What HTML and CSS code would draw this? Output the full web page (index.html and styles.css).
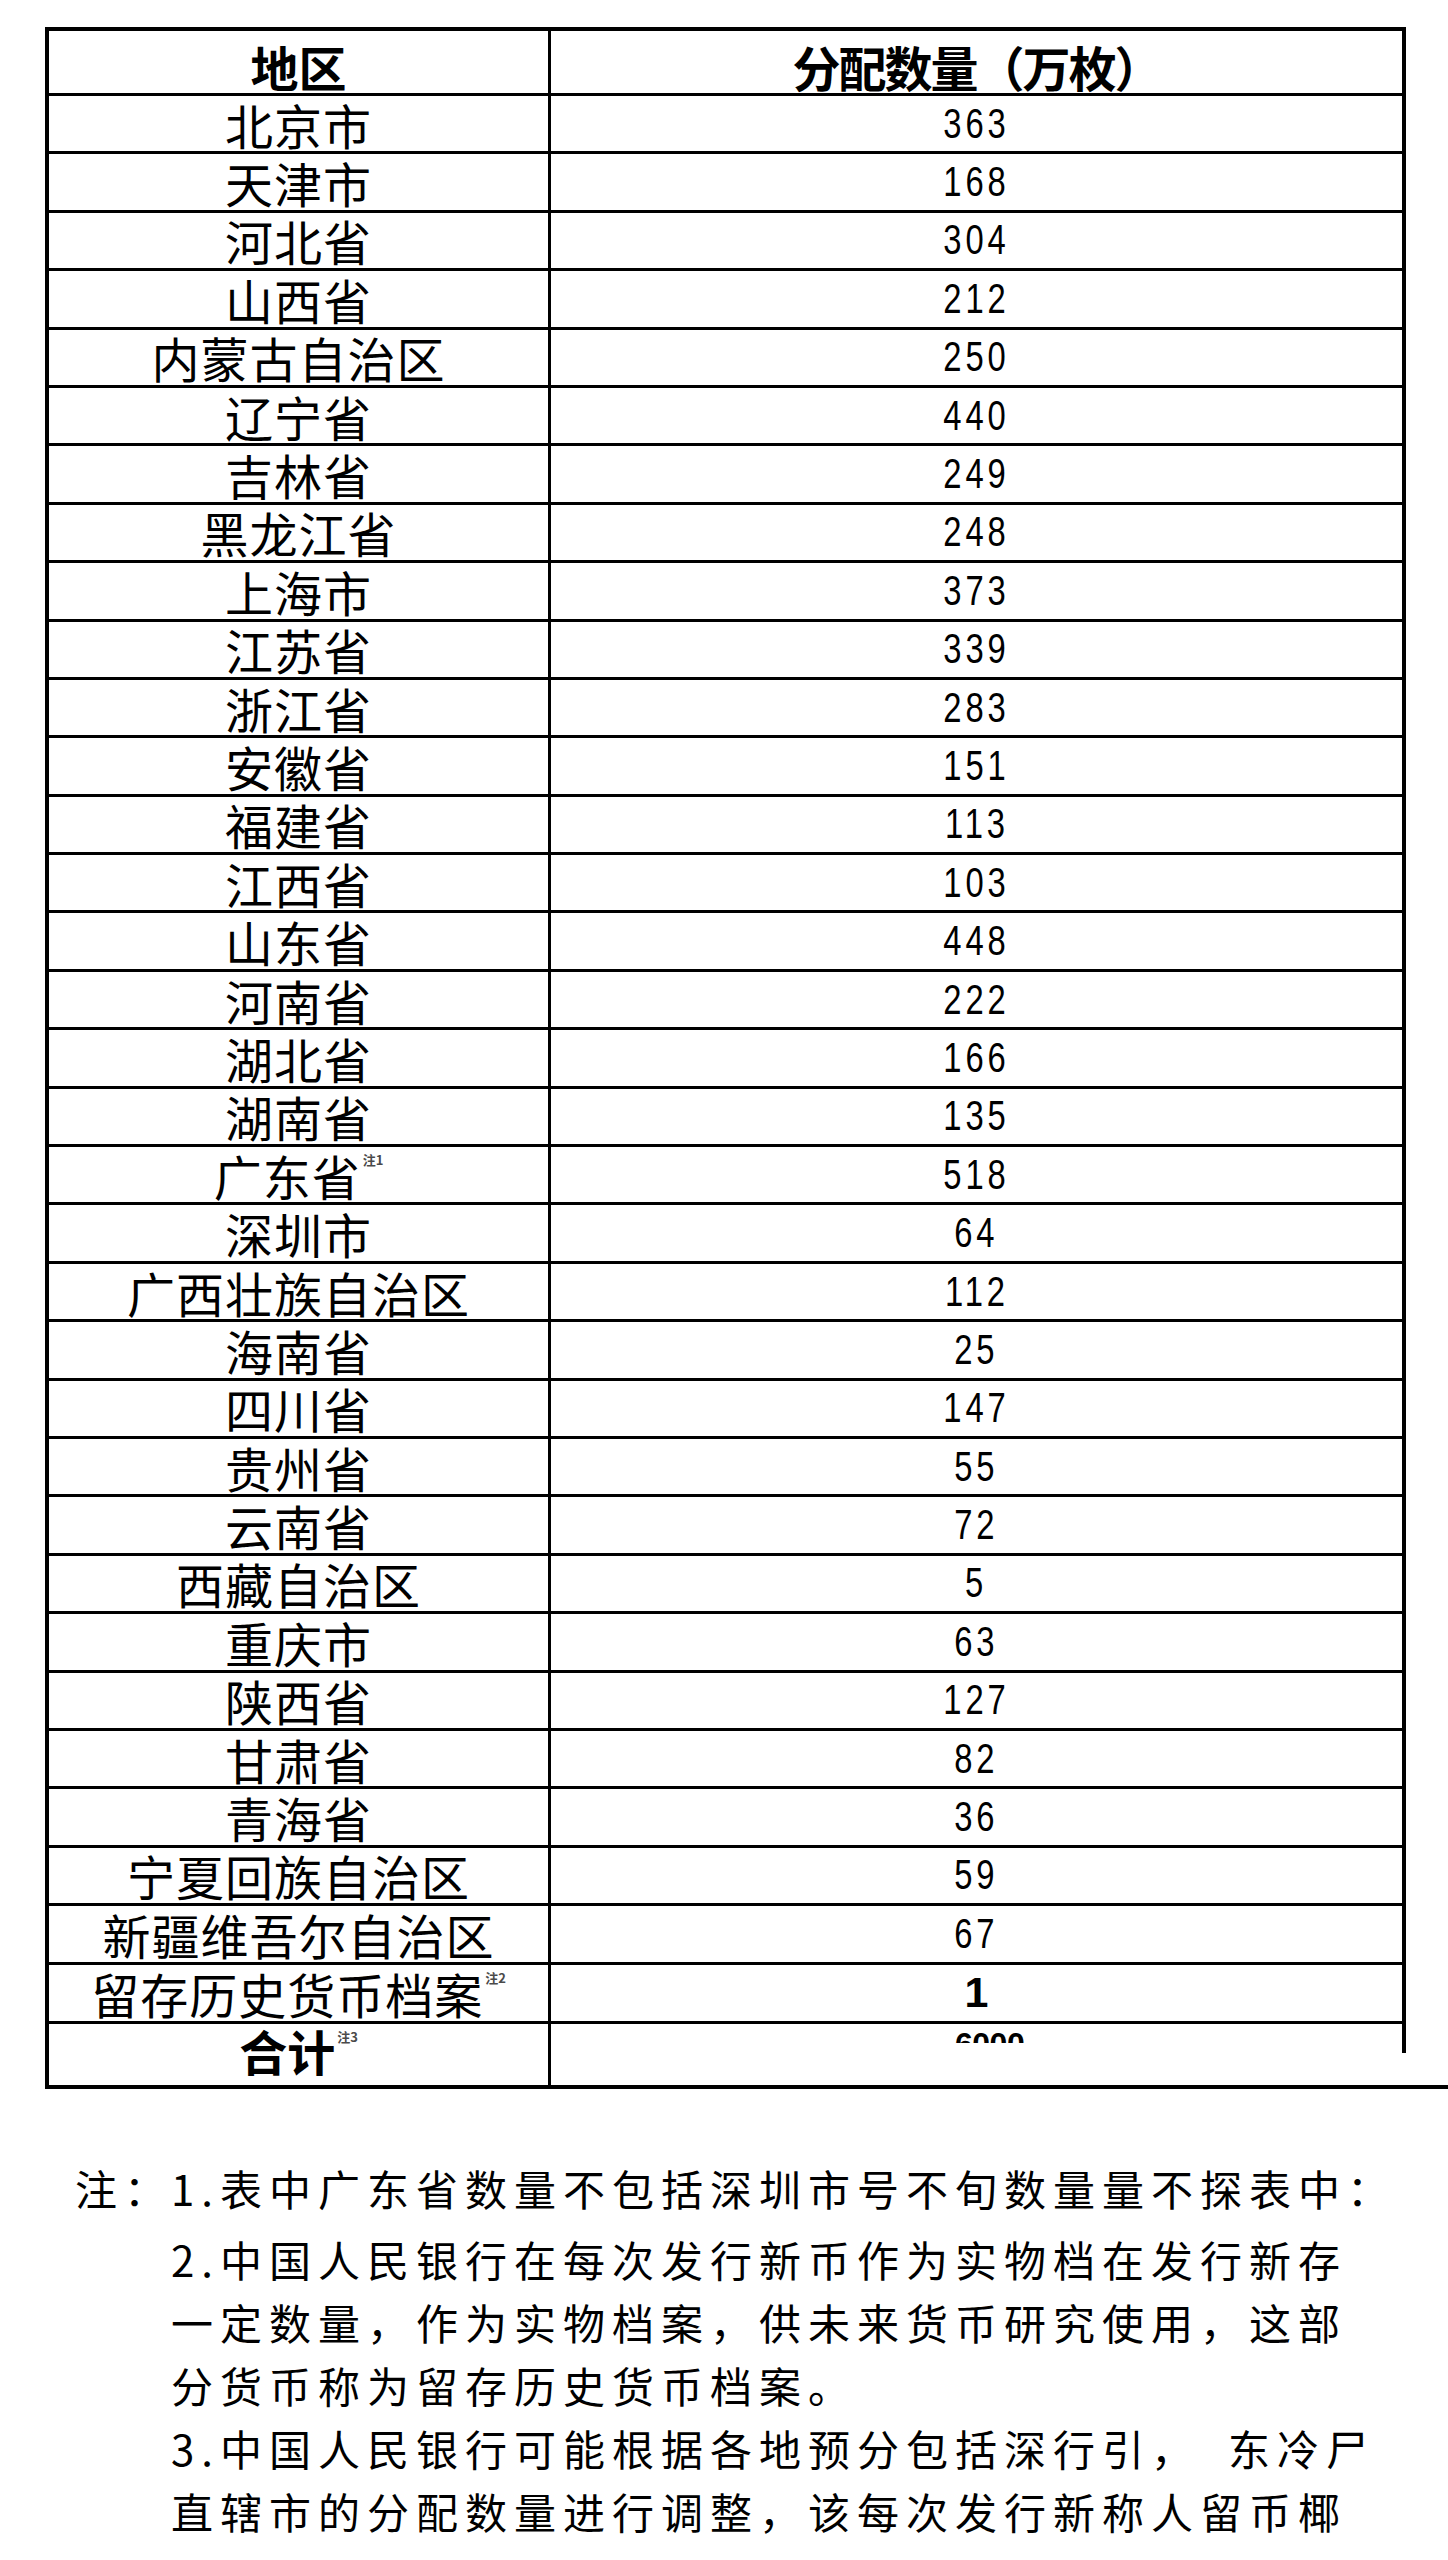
FILE: index.html
```html
<!DOCTYPE html>
<html lang="zh-CN">
<head>
<meta charset="utf-8">
<title>分配数量</title>
<link rel="stylesheet" href="styles.css">
</head>
<body>
<div class="sheet">
  <div class="grid">
    <div class="row head">
      <div class="cell name"><span class="hd">地区</span></div>
      <div class="cell val"><span class="hd hd2">分配数量（万枚）</span></div>
    </div>
    <div class="row"><div class="cell name">北京市</div><div class="cell val"><span class="num">363</span></div></div>
    <div class="row"><div class="cell name">天津市</div><div class="cell val"><span class="num">168</span></div></div>
    <div class="row"><div class="cell name">河北省</div><div class="cell val"><span class="num">304</span></div></div>
    <div class="row"><div class="cell name">山西省</div><div class="cell val"><span class="num">212</span></div></div>
    <div class="row"><div class="cell name">内蒙古自治区</div><div class="cell val"><span class="num">250</span></div></div>
    <div class="row"><div class="cell name">辽宁省</div><div class="cell val"><span class="num">440</span></div></div>
    <div class="row"><div class="cell name">吉林省</div><div class="cell val"><span class="num">249</span></div></div>
    <div class="row"><div class="cell name">黑龙江省</div><div class="cell val"><span class="num">248</span></div></div>
    <div class="row"><div class="cell name">上海市</div><div class="cell val"><span class="num">373</span></div></div>
    <div class="row"><div class="cell name">江苏省</div><div class="cell val"><span class="num">339</span></div></div>
    <div class="row"><div class="cell name">浙江省</div><div class="cell val"><span class="num">283</span></div></div>
    <div class="row"><div class="cell name">安徽省</div><div class="cell val"><span class="num">151</span></div></div>
    <div class="row"><div class="cell name">福建省</div><div class="cell val"><span class="num">113</span></div></div>
    <div class="row"><div class="cell name">江西省</div><div class="cell val"><span class="num">103</span></div></div>
    <div class="row"><div class="cell name">山东省</div><div class="cell val"><span class="num">448</span></div></div>
    <div class="row"><div class="cell name">河南省</div><div class="cell val"><span class="num">222</span></div></div>
    <div class="row"><div class="cell name">湖北省</div><div class="cell val"><span class="num">166</span></div></div>
    <div class="row"><div class="cell name">湖南省</div><div class="cell val"><span class="num">135</span></div></div>
    <div class="row"><div class="cell name">广东省<sup class="note">注1</sup></div><div class="cell val"><span class="num">518</span></div></div>
    <div class="row"><div class="cell name">深圳市</div><div class="cell val"><span class="num">64</span></div></div>
    <div class="row"><div class="cell name">广西壮族自治区</div><div class="cell val"><span class="num">112</span></div></div>
    <div class="row"><div class="cell name">海南省</div><div class="cell val"><span class="num">25</span></div></div>
    <div class="row"><div class="cell name">四川省</div><div class="cell val"><span class="num">147</span></div></div>
    <div class="row"><div class="cell name">贵州省</div><div class="cell val"><span class="num">55</span></div></div>
    <div class="row"><div class="cell name">云南省</div><div class="cell val"><span class="num">72</span></div></div>
    <div class="row"><div class="cell name">西藏自治区</div><div class="cell val"><span class="num">5</span></div></div>
    <div class="row"><div class="cell name">重庆市</div><div class="cell val"><span class="num">63</span></div></div>
    <div class="row"><div class="cell name">陕西省</div><div class="cell val"><span class="num">127</span></div></div>
    <div class="row"><div class="cell name">甘肃省</div><div class="cell val"><span class="num">82</span></div></div>
    <div class="row"><div class="cell name">青海省</div><div class="cell val"><span class="num">36</span></div></div>
    <div class="row"><div class="cell name">宁夏回族自治区</div><div class="cell val"><span class="num">59</span></div></div>
    <div class="row"><div class="cell name">新疆维吾尔自治区</div><div class="cell val"><span class="num">67</span></div></div>
    <div class="row keep"><div class="cell name">留存历史货币档案<sup class="note">注2</sup></div><div class="cell val"><span class="one">1</span></div></div>
  </div>
  <div class="total">
    <div class="cell name total-name"><span class="hd">合计</span><sup class="note">注3</sup></div>
    <div class="total-val">
      <div class="total-box"><span class="clip">6000</span></div>
    </div>
  </div>
</div>

<div class="notes">
  <div class="label">注：</div>
  <div class="items">
    <div class="item first">
      <div class="line">1.表中广东省数量不包括深圳市号不旬数量量不探表中：</div>
    </div>
    <div class="item">
      <div class="line">2.中国人民银行在每次发行新币作为实物档在发行新存</div>
      <div class="line">一定数量，作为实物档案，供未来货币研究使用，这部</div>
      <div class="line">分货币称为留存历史货币档案。</div>
    </div>
    <div class="item">
      <div class="line">3.中国人民银行可能根据各地预分包括深行引，　东冷尸</div>
      <div class="line">直辖市的分配数量进行调整，该每次发行新称人留币椰</div>
    </div>
  </div>
</div>
</body>
</html>
```

FILE: styles.css
```css
html, body {
  margin: 0;
  padding: 0;
  background: #ffffff;
  color: #000000;
}

body {
  width: 1448px;
  font-family: "Noto Sans CJK SC", "Noto Sans CJK TC", sans-serif;
}

.sheet {
  padding-top: 27px;
  margin-left: 45px;
  width: 1403px;
}

.grid {
  box-sizing: border-box;
  width: 1361px;
  border-top: 4px solid #000;
  border-left: 4px solid #000;
  border-right: 4px solid #000;
}

.row {
  box-sizing: border-box;
  display: grid;
  grid-template-columns: 502px 1fr;
  height: 58.4px;
  border-bottom: 3px solid #000;
}

.row.head {
  height: 65px;
}

.row.keep {
  height: 59.5px;
}

.cell {
  display: flex;
  align-items: center;
  justify-content: center;
  box-sizing: border-box;
}

.name {
  border-right: 3px solid #000;
  font-size: 48px;
  line-height: 48px;
  letter-spacing: 1px;
  white-space: nowrap;
}

.hd {
  font-weight: 700;
  letter-spacing: 0;
}

.hd2 {
  font-size: 48px;
  letter-spacing: -2px;
  margin-bottom: 4px;
}

.head .name .hd {
  margin-bottom: 4px;
}

.num {
  display: inline-block;
  font-family: "Liberation Sans", Arial, sans-serif;
  font-size: 42px;
  line-height: 42px;
  letter-spacing: 5px;
  transform: scaleX(0.78);
}

.one {
  font-family: "Liberation Sans", Arial, sans-serif;
  font-weight: 700;
  font-size: 43px;
  line-height: 43px;
}

.note {
  align-self: flex-start;
  font-family: "Noto Sans CJK SC", sans-serif;
  font-size: 13px;
  line-height: 13px;
  letter-spacing: 0;
  color: #4a4a4a;
  font-weight: 700;
  margin-left: 2px;
  margin-top: 6px;
}

.total {
  box-sizing: border-box;
  display: grid;
  grid-template-columns: 502px 1fr;
  width: 1403px;
  height: 65px;
  border-left: 4px solid #000;
  border-bottom: 4px solid #000;
}

.total-name {
  align-items: center;
  padding-bottom: 10px;
}

.total-name .note {
  margin-top: 6px;
}

.total-val {
  display: flex;
  flex-direction: column;
  align-items: flex-start;
}

.total-box {
  box-sizing: border-box;
  width: 855px;
  height: 29px;
  border-right: 4px solid #000;
  padding-top: 4px;
  padding-left: 404px;
}

.clip {
  display: block;
  width: 80px;
  height: 15px;
  overflow: hidden;
  font-family: "Liberation Sans", Arial, sans-serif;
  font-weight: 700;
  font-size: 32px;
  line-height: 32px;
  letter-spacing: -0.5px;
}

.notes {
  display: flex;
  margin-top: 67px;
  padding-left: 75px;
  font-size: 42px;
  line-height: 63px;
  letter-spacing: 7px;
  white-space: nowrap;
}

.label {
  width: 96px;
  flex: none;
}

.items {
  display: flex;
  flex-direction: column;
}

.item.first {
  margin-bottom: 8px;
}
```
